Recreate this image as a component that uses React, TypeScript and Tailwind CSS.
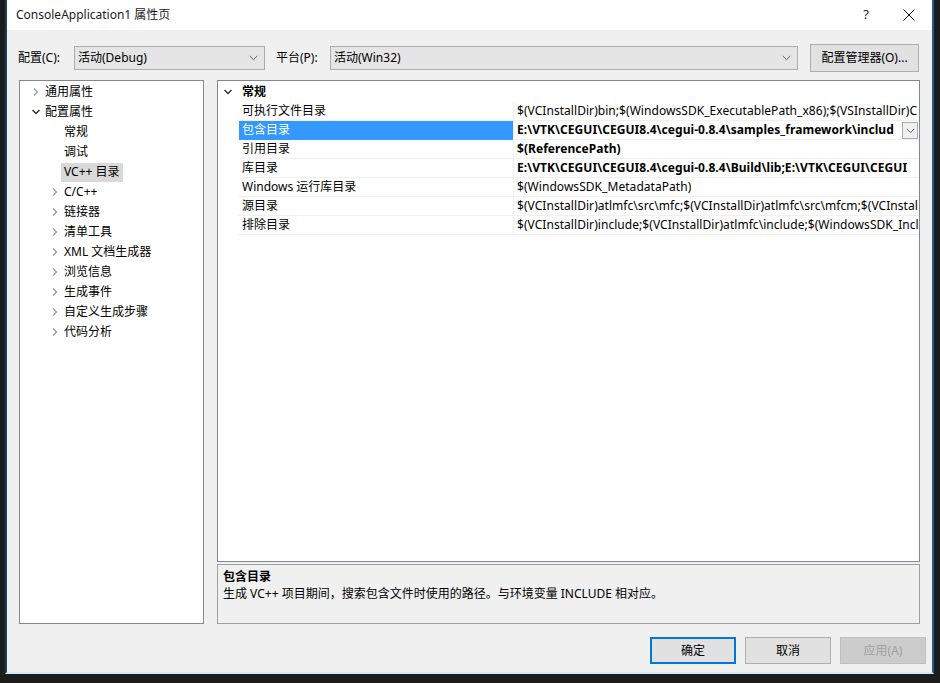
import React from "react";

const FONT = { fontFamily: '"Noto Sans", "Noto Sans CJK SC", sans-serif' };

function ChevRight({ className = "" }: { className?: string }) {
  return (
    <svg width="10" height="10" viewBox="0 0 10 10" className={className}>
      <path d="M3 1.5 L6.5 5 L3 8.5" fill="none" stroke="currentColor" strokeWidth="1.3" />
    </svg>
  );
}
function ChevDown({ className = "" }: { className?: string }) {
  return (
    <svg width="10" height="10" viewBox="0 0 10 10" className={className}>
      <path d="M1.5 3 L5 6.5 L8.5 3" fill="none" stroke="currentColor" strokeWidth="1.5" />
    </svg>
  );
}
function SmallDown({ className = "" }: { className?: string }) {
  return (
    <svg width="9" height="6" viewBox="0 0 9 6" className={className}>
      <path d="M0.8 1 L4.5 4.6 L8.2 1" fill="none" stroke="currentColor" strokeWidth="1" />
    </svg>
  );
}

type TreeItem = { label: string; level: number; chev?: "r" | "d"; selected?: boolean };
const tree: TreeItem[] = [
  { label: "通用属性", level: 0, chev: "r" },
  { label: "配置属性", level: 0, chev: "d" },
  { label: "常规", level: 1 },
  { label: "调试", level: 1 },
  { label: "VC++ 目录", level: 1, selected: true },
  { label: "C/C++", level: 1, chev: "r" },
  { label: "链接器", level: 1, chev: "r" },
  { label: "清单工具", level: 1, chev: "r" },
  { label: "XML 文档生成器", level: 1, chev: "r" },
  { label: "浏览信息", level: 1, chev: "r" },
  { label: "生成事件", level: 1, chev: "r" },
  { label: "自定义生成步骤", level: 1, chev: "r" },
  { label: "代码分析", level: 1, chev: "r" },
];

type Prop = { name: string; value: string; bold?: boolean; selected?: boolean };
const props: Prop[] = [
  { name: "可执行文件目录", value: "$(VCInstallDir)bin;$(WindowsSDK_ExecutablePath_x86);$(VSInstallDir)C" },
  { name: "包含目录", value: "E:\\VTK\\CEGUI\\CEGUI8.4\\cegui-0.8.4\\samples_framework\\includ", bold: true, selected: true },
  { name: "引用目录", value: "$(ReferencePath)", bold: true },
  { name: "库目录", value: "E:\\VTK\\CEGUI\\CEGUI8.4\\cegui-0.8.4\\Build\\lib;E:\\VTK\\CEGUI\\CEGUI", bold: true },
  { name: "Windows 运行库目录", value: "$(WindowsSDK_MetadataPath)" },
  { name: "源目录", value: "$(VCInstallDir)atlmfc\\src\\mfc;$(VCInstallDir)atlmfc\\src\\mfcm;$(VCInstal" },
  { name: "排除目录", value: "$(VCInstallDir)include;$(VCInstallDir)atlmfc\\include;$(WindowsSDK_Incl" },
];

export default function App() {
  return (
    <div className="w-[940px] h-[683px] bg-[#1c1c1c] overflow-hidden text-[12px] text-black" style={FONT}>
      <div className="ml-[5px] w-[929px] h-[674px] border-l-2 border-l-[#1e3d5c] border-r-2 border-r-[#2a5a85] border-b-2 border-b-[#cfe7f7] flex flex-col bg-[#f0f0f0]">
        {/* title bar */}
        <div className="h-[30px] bg-white flex items-center shrink-0">
          <div className="pl-[9px] text-[12px] text-[#1a1a1a] flex-1">ConsoleApplication1 属性页</div>
          <div className="w-[30px] text-center text-[13px] text-[#222] mr-[13px]">?</div>
          <div className="w-[30px] flex justify-center mr-[8px]">
            <svg width="12" height="12" viewBox="0 0 12 12">
              <path d="M0.5 0.5 L11.5 11.5 M11.5 0.5 L0.5 11.5" stroke="#111" strokeWidth="1" />
            </svg>
          </div>
        </div>

        {/* config row */}
        <div className="mt-[14px] h-[28px] flex items-center shrink-0">
          <div className="ml-[11px] w-[56px]">配置(C):</div>
          <div className="w-[191px] h-[24px] bg-[#e5e5e5] border border-[#acacac] flex items-center pl-[3px]">
            <span className="flex-1">活动(Debug)</span>
            <SmallDown className="text-[#606060] mr-[6px]" />
          </div>
          <div className="ml-[11px] w-[54px]">平台(P):</div>
          <div className="w-[468px] h-[24px] bg-[#e5e5e5] border border-[#acacac] flex items-center pl-[3px]">
            <span className="flex-1">活动(Win32)</span>
            <SmallDown className="text-[#606060] mr-[6px]" />
          </div>
          <div className="ml-[12px] w-[109px] h-[28px] bg-[#e1e1e1] border border-[#adadad] flex items-center justify-center">
            配置管理器(O)...
          </div>
        </div>

        {/* panels */}
        <div className="mt-[8px] h-[544px] flex shrink-0">
          {/* tree */}
          <div className="ml-[12px] w-[185px] h-full bg-white border border-[#828790] pt-[1px]">
            {tree.map((t, i) => (
              <div key={i} className="h-[20px] flex items-center">
                <div className={t.level === 0 ? "w-[25px] flex justify-end pr-[4px]" : "w-[44px] flex justify-end pr-[4px]"}>
                  {t.chev === "r" && <ChevRight className="text-[#9a9a9a]" />}
                  {t.chev === "d" && <ChevDown className="text-[#333]" />}
                </div>
                <div className={t.selected ? "bg-[#d9d9d9] h-[19px] flex items-center px-[3px] -ml-[3px]" : "px-0"}>
                  {t.label}
                </div>
              </div>
            ))}
          </div>

          {/* right */}
          <div className="ml-[13px] w-[703px] h-full flex flex-col">
            <div className="h-[482px] bg-white border border-[#828790] overflow-hidden pt-[1px]">
              <div className="h-[20px] flex items-center">
                <div className="w-[20px] flex justify-center">
                  <ChevDown className="text-[#333]" />
                </div>
                <div className="font-bold pl-[4px]">常规</div>
              </div>
              {props.map((p, i) => (
                <div key={i} className="h-[19px] flex pl-[21px]">
                  <div
                    className={
                      p.selected
                        ? "w-[274px] shrink-0 bg-[#3399ff] text-white pl-[3px] flex items-center border-b border-[#3399ff]"
                        : "w-[274px] shrink-0 pl-[3px] flex items-center border-b border-[#f0f0f0]"
                    }
                  >
                    {p.name}
                  </div>
                  <div className="w-[1px] bg-[#f0f0f0] shrink-0" />
                  <div className="flex-1 min-w-0 flex items-center border-b border-[#f0f0f0] pl-[3px] relative">
                    <div className={p.bold ? "whitespace-nowrap overflow-hidden font-bold tracking-[0.05px]" : "whitespace-nowrap overflow-hidden tracking-[0.05px]"}>
                      {p.value}
                    </div>
                    {p.selected && (
                      <div className="absolute right-[1px] top-[1px] w-[16px] h-[17px] bg-[#f0f0f0] border border-[#acacac] flex items-center justify-center">
                        <SmallDown className="text-[#606060]" />
                      </div>
                    )}
                  </div>
                </div>
              ))}
            </div>
            <div className="mt-[2px] h-[60px] border border-[#a0a0a0] bg-[#f0f0f0] pl-[5px] pt-[3px]">
              <div className="font-bold leading-[17px]">包含目录</div>
              <div className="leading-[17px]">生成 VC++ 项目期间，搜索包含文件时使用的路径。与环境变量 INCLUDE 相对应。</div>
            </div>
          </div>
        </div>

        {/* buttons */}
        <div className="mt-[13px] flex justify-end pr-[6px] gap-[9px]">
          <div className="w-[86px] h-[27px] bg-[#e1e1e1] border-2 border-[#0078d7] flex items-center justify-center">确定</div>
          <div className="w-[86px] h-[27px] bg-[#e1e1e1] border border-[#adadad] flex items-center justify-center">取消</div>
          <div className="w-[86px] h-[27px] bg-[#cccccc] border border-[#bfbfbf] flex items-center justify-center text-[#a0a0a0]">应用(A)</div>
        </div>
      </div>
    </div>
  );
}
